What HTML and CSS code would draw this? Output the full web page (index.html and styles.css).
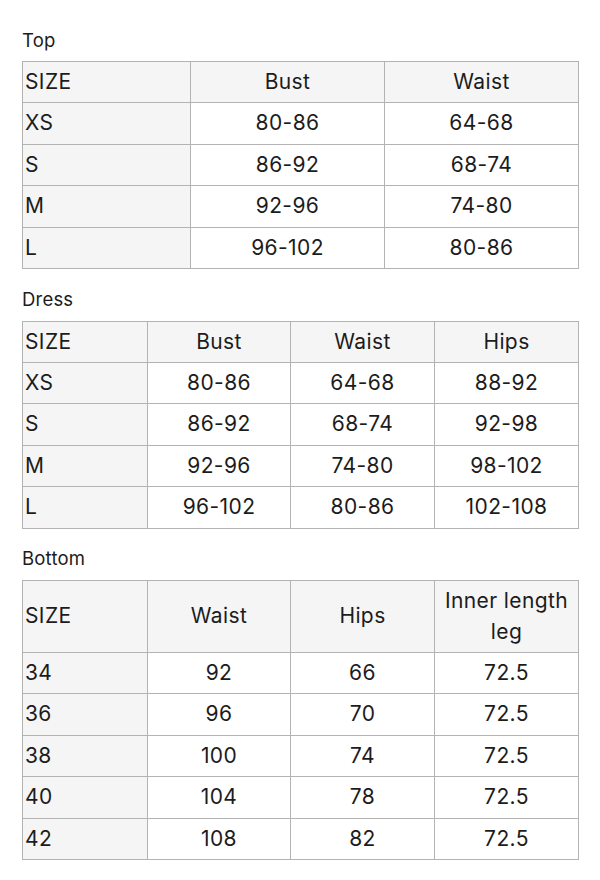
FILE: index.html
```html
<!DOCTYPE html>
<html>
<head>
<meta charset="utf-8">
<link rel="stylesheet" href="styles.css">
</head>
<body>
<div class="page">
  <h2 class="label label-first">Top</h2>
  <table class="chart">
    <colgroup><col class="c-top-size"><col class="c-top"><col class="c-top"></colgroup>
    <tr class="head"><td class="size">SIZE</td><td>Bust</td><td>Waist</td></tr>
    <tr><td class="size">XS</td><td>80-86</td><td>64-68</td></tr>
    <tr><td class="size">S</td><td>86-92</td><td>68-74</td></tr>
    <tr><td class="size">M</td><td>92-96</td><td>74-80</td></tr>
    <tr><td class="size">L</td><td>96-102</td><td>80-86</td></tr>
  </table>

  <h2 class="label">Dress</h2>
  <table class="chart">
    <colgroup><col class="c-size"><col class="c-a"><col class="c-b"><col class="c-b"></colgroup>
    <tr class="head"><td class="size">SIZE</td><td>Bust</td><td>Waist</td><td>Hips</td></tr>
    <tr><td class="size">XS</td><td>80-86</td><td>64-68</td><td>88-92</td></tr>
    <tr><td class="size">S</td><td>86-92</td><td>68-74</td><td>92-98</td></tr>
    <tr><td class="size">M</td><td>92-96</td><td>74-80</td><td>98-102</td></tr>
    <tr><td class="size">L</td><td>96-102</td><td>80-86</td><td>102-108</td></tr>
  </table>

  <h2 class="label">Bottom</h2>
  <table class="chart">
    <colgroup><col class="c-size"><col class="c-a"><col class="c-b"><col class="c-b"></colgroup>
    <tr class="head"><td class="size">SIZE</td><td>Waist</td><td>Hips</td><td>Inner length leg</td></tr>
    <tr><td class="size">34</td><td>92</td><td>66</td><td>72.5</td></tr>
    <tr><td class="size">36</td><td>96</td><td>70</td><td>72.5</td></tr>
    <tr><td class="size">38</td><td>100</td><td>74</td><td>72.5</td></tr>
    <tr><td class="size">40</td><td>104</td><td>78</td><td>72.5</td></tr>
    <tr><td class="size">42</td><td>108</td><td>82</td><td>72.5</td></tr>
  </table>
</div>
</body>
</html>
```
FILE: styles.css
```css
html, body {
  margin: 0;
  padding: 0;
  background: #ffffff;
}
body {
  font-family: Inter, "Liberation Sans", sans-serif;
  color: #1c1c1c;
}
.page {
  padding: 0 22px;
}
.label {
  margin: 17.6px 0 10px 0;
  font-size: 18.5px;
  font-weight: 400;
  line-height: 24px;
  letter-spacing: 0.2px;
  color: #1c1c1c;
}
.label-first {
  margin-top: 28px;
  margin-bottom: 9px;
}
.chart {
  width: 556px;
  border-collapse: collapse;
  table-layout: fixed;
}
.chart td {
  border: 1px solid #b3b3b3;
  padding: 5px 2px 5px 2px;
  font-size: 21px;
  line-height: 30.4px;
  letter-spacing: 0.4px;
  text-align: center;
  vertical-align: middle;
}
.chart td.size {
  text-align: left;
  padding-left: 2px;
  background: #f5f5f5;
}
.chart .head td {
  background: #f5f5f5;
}
.c-top-size { width: 168px; }
.c-top { width: 194px; }
.c-size { width: 125px; }
.c-a { width: 143px; }
.c-b { width: 144px; }
```
